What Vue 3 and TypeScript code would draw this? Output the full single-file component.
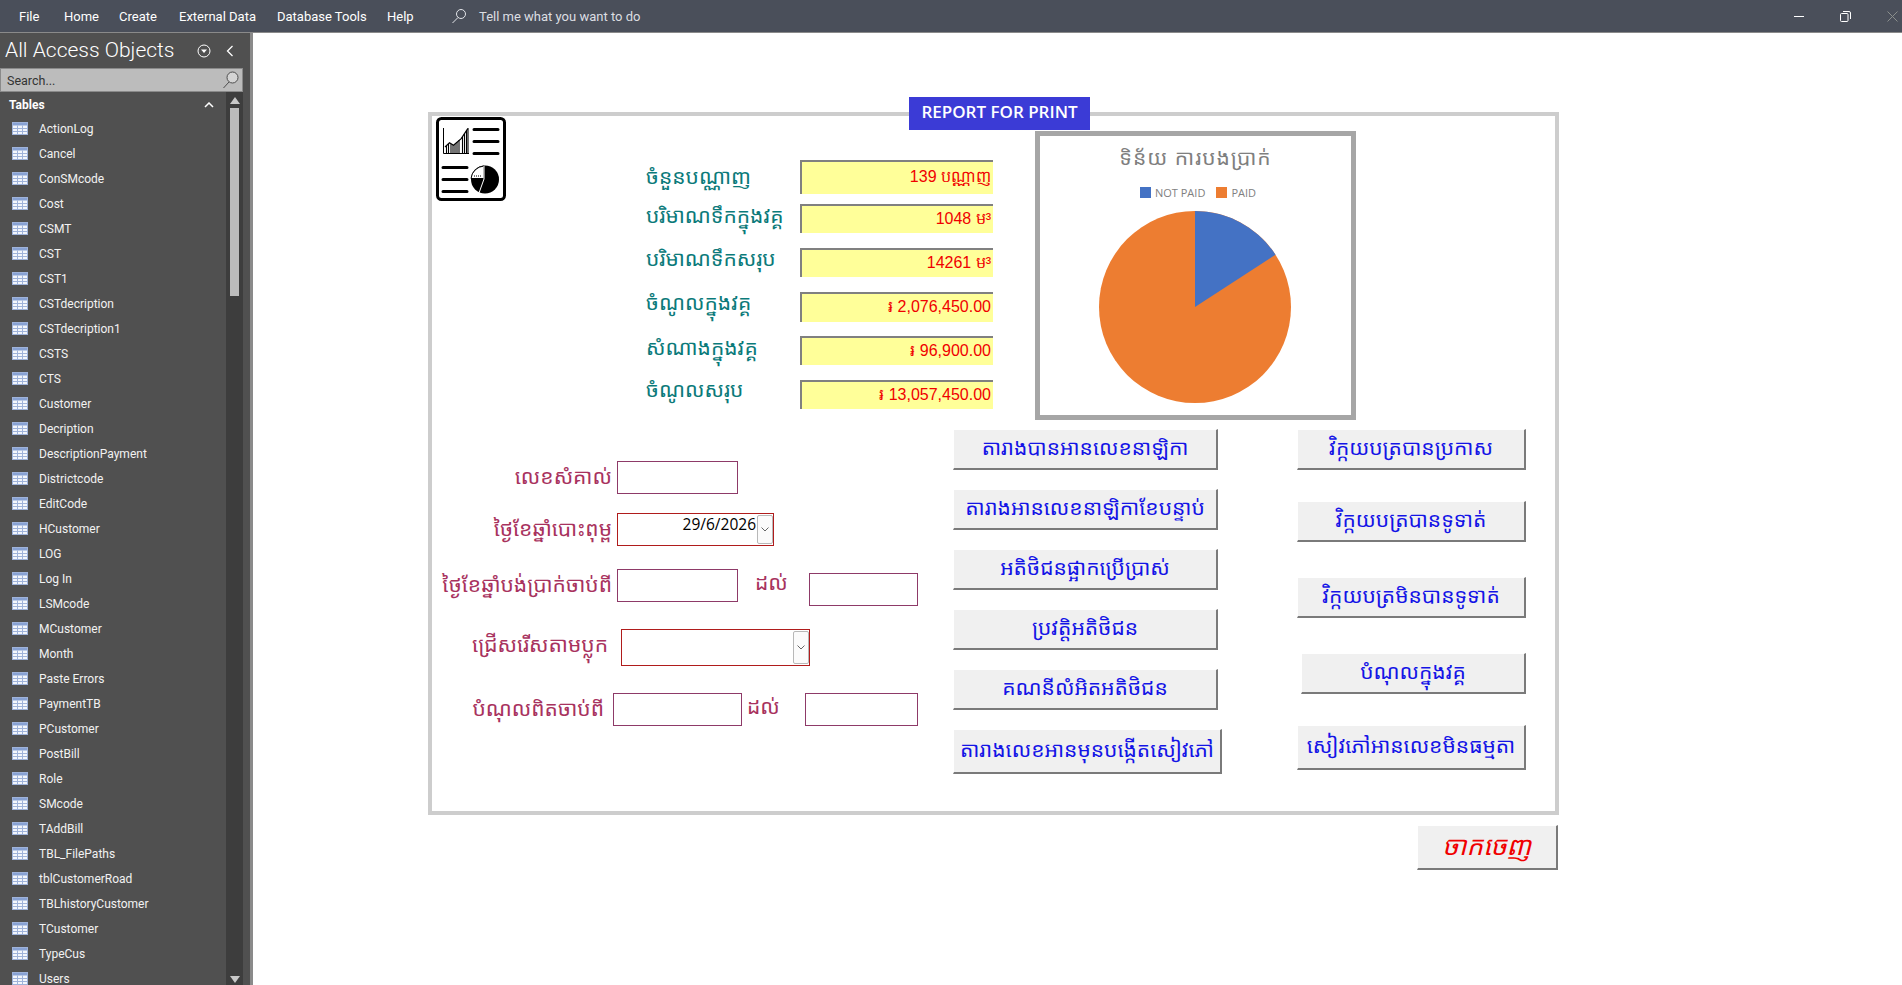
<template>
  <div class="app">
    <header class="topbar">
      <nav class="menu">
        <span v-for="m in menu" :key="m.name" :style="{ width: `${m.width}px` }">{{ m.name }}</span>
      </nav>
      <svg class="tell-icon" width="16" height="16" viewBox="0 0 16 16" fill="none" stroke="#e4e6ea" stroke-width="1">
        <circle cx="10" cy="6" r="4.5" />
        <path d="M7 9.5 1.5 15" />
      </svg>
      <span class="tell">Tell me what you want to do</span>
      <div class="win">
        <svg width="10" height="10" viewBox="0 0 10 10" stroke="#fff" fill="none"><path d="M0 5.5h10" /></svg>
        <svg width="11" height="11" viewBox="0 0 11 11" stroke="#fff" fill="none">
          <rect x="0.5" y="2.5" width="7.5" height="8" rx="1" />
          <path d="M3 .5h6a1.500 1.500 0 0 1 1.500 1.500v6" />
        </svg>
        <svg width="11" height="11" viewBox="0 0 11 11" stroke="#8b8f8c" fill="none"><path d="m.5.5 10 10M10.500.5l-10 10" /></svg>
      </div>
    </header>

    <div class="main">
      <aside class="nav">
        <div class="nav-head">
          <span class="nav-title">All Access Objects</span>
          <svg class="nav-drop" width="14" height="14" viewBox="0 0 14 14" fill="none" stroke="#fff">
            <circle cx="7" cy="7" r="6" />
            <path d="M4 5.500h6L7 9z" fill="#fff" stroke="none" />
          </svg>
          <svg class="nav-back" width="8" height="12" viewBox="0 0 8 12" fill="none" stroke="#fff" stroke-width="1.300">
            <path d="M6.500 1 1.500 6l5 5" />
          </svg>
        </div>
        <div class="nav-search">
          <span>Search...</span>
          <svg width="17" height="18" viewBox="0 0 17 18" fill="none" stroke="#4d4d4d">
            <circle cx="10.500" cy="6.500" r="5.500" fill="#d4d4d4" />
            <path d="M7 11 1.500 17" />
          </svg>
        </div>
        <div class="nav-body">
          <div class="nav-list">
            <div class="nav-group">
              <span>Tables</span>
              <svg width="10" height="6" viewBox="0 0 10 6" fill="none" stroke="#fff" stroke-width="1.500"><path d="m1 5 4-4 4 4" /></svg>
            </div>
            <div v-for="name in tables" :key="name" class="nav-item">
              <svg width="16" height="13" viewBox="0 0 16 13">
                <rect x="0.500" y="0.500" width="15" height="12" fill="#f3f6fc" stroke="#9fb3da" />
                <rect x="1" y="1" width="14" height="2.500" fill="#88a2d4" />
                <path d="M1 6.500h14M1 9.500h14M5.500 3.500v9M10.500 3.500v9" stroke="#9fb3da" />
              </svg>
              <span>{{ name }}</span>
            </div>
          </div>
          <div class="scroll">
            <i class="arrow up"></i>
            <i class="thumb"></i>
            <i class="arrow down"></i>
          </div>
        </div>
      </aside>
      <div class="splitter"></div>

      <section class="canvas">
        <div class="frame">
          <div class="badge">REPORT FOR PRINT</div>

          <div class="top">
            <svg class="report-icon" width="70" height="84" viewBox="0 0 70 84">
              <rect x="1.500" y="1.500" width="67" height="81" rx="4" fill="#fff" stroke="#000" stroke-width="3" />
              <path d="M7.500 11v25.500H33" fill="none" stroke="#000" />
              <path d="M9 30 13.500 25.700l4 2.600 7.700-6.600L31.800 11.700" fill="none" stroke="#000" stroke-width="1.200" />
              <path d="M10.500 36v-7M12.500 36V27M15 36V27M17 36V28M19 36v-9M21 36V25M23 36V23M26.500 36V20M28.500 36V17M30.500 36V14M32 36V11" stroke="#000" stroke-width="1.100" />
              <path d="M38 12.500h24M38 24.500h24M38 36.500h24M7 50.500h24M7 62.500h24M7 74.500h24" stroke="#000" stroke-width="3" stroke-linecap="round" />
              <circle cx="49" cy="62.500" r="14" fill="#000" />
              <path d="M48 49a14 14 0 0 0-13 12.500h13z" fill="#fff" stroke="#000" />
              <path d="M38 59h8" stroke="#000" stroke-dasharray="1 1" />
              <path d="m48 62-5 14" stroke="#fff" />
              <path d="M48 49v13" stroke="#fff" />
            </svg>

            <div class="summary">
              <div v-for="row in summary" :key="row.label" class="sum-row">
                <span class="sum-label" :style="{ marginTop: `${row.labelTop}px` }">{{ row.label }}</span>
                <span class="sum-field" :style="{ height: `${row.height}px` }">{{ row.value }}</span>
              </div>
            </div>

            <div class="chart">
              <div class="chart-title">ទិន័យ ការបងប្រាក់</div>
              <div class="legend">
                <i class="blue"></i><span>NOT PAID</span>
                <i class="orange"></i><span>PAID</span>
              </div>
              <svg class="pie" width="194" height="194" viewBox="-97 -97 194 194">
                <circle r="96" fill="#ed7d31" />
                <path d="M0 0V-96A96 96 0 0 1 80.500-52.300Z" fill="#4472c4" />
              </svg>
            </div>
          </div>

          <div class="bottom">
            <div class="form">
              <div class="f-row r1">
                <label class="f-label">លេខសំគាល់</label>
                <input class="box" type="text" />
              </div>
              <div class="f-row r2">
                <label class="f-label">ថ្ងៃខែឆ្នាំបោះពុម្ព</label>
                <div class="combo date">
                  <span>29/6/2026</span>
                  <i class="drop"><svg width="8" height="5" viewBox="0 0 8 5" fill="none" stroke="#666"><path d="m.5.500 3.500 3.500L7.500.500" /></svg></i>
                </div>
              </div>
              <div class="f-row r3">
                <label class="f-label">ថ្ងៃខែឆ្នាំបង់ប្រាក់ចាប់ពី</label>
                <input class="box" type="text" />
                <span class="to">ដល់</span>
                <input class="box narrow" type="text" />
              </div>
              <div class="f-row r4">
                <label class="f-label">ជ្រើសរើសតាមប្លុក</label>
                <div class="combo block">
                  <i class="drop"><svg width="8" height="5" viewBox="0 0 8 5" fill="none" stroke="#666"><path d="m.5.500 3.500 3.500L7.500.500" /></svg></i>
                </div>
              </div>
              <div class="f-row r5">
                <label class="f-label">បំណុលពិតចាប់ពី</label>
                <input class="box" type="text" />
                <span class="to">ដល់</span>
                <input class="box narrow" type="text" />
              </div>
            </div>

            <div class="col-left">
              <button v-for="b in leftButtons" :key="b" class="btn">{{ b }}</button>
              <button class="btn tall wide">តារាងលេខអានមុនបង្កើតសៀវភៅ</button>
            </div>

            <div class="col-right">
              <button class="btn">វិក្កយបត្របានប្រកាស</button>
              <button class="btn">វិក្កយបត្របានទូទាត់</button>
              <button class="btn">វិក្កយបត្រមិនបានទូទាត់</button>
              <button class="btn short">បំណុលក្នុងវគ្គ</button>
              <button class="btn tall">សៀវភៅអានលេខមិនធម្មតា</button>
            </div>
          </div>
        </div>
        <button class="btn exit">ចាកចេញ</button>
      </section>
    </div>
  </div>
</template>

<script setup lang="ts">
const menu = [
  { name: 'File', width: 45 },
  { name: 'Home', width: 55 },
  { name: 'Create', width: 60 },
  { name: 'External Data', width: 98 },
  { name: 'Database Tools', width: 110 },
  { name: 'Help', width: 64 }
]

const tables = [
  'ActionLog', 'Cancel', 'ConSMcode', 'Cost', 'CSMT', 'CST', 'CST1', 'CSTdecription',
  'CSTdecription1', 'CSTS', 'CTS', 'Customer', 'Decription', 'DescriptionPayment',
  'Districtcode', 'EditCode', 'HCustomer', 'LOG', 'Log In', 'LSMcode', 'MCustomer', 'Month',
  'Paste Errors', 'PaymentTB', 'PCustomer', 'PostBill', 'Role', 'SMcode', 'TAddBill',
  'TBL_FilePaths', 'tblCustomerRoad', 'TBLhistoryCustomer', 'TCustomer', 'TypeCus', 'Users'
]

const summary = [
  { label: 'ចំនួនបណ្ណាញ', value: '139 បណ្ណាញ', height: 34, labelTop: -1 },
  { label: 'បរិមាណទឹកក្នុងវគ្គ', value: '1048 ម³', height: 29, labelTop: -6 },
  { label: 'បរិមាណទឹកសរុប', value: '14261 ម³', height: 29, labelTop: -7 },
  { label: 'ចំណូលក្នុងវគ្គ', value: '៛ 2,076,450.00', height: 30, labelTop: -7 },
  { label: 'សំណាងក្នុងវគ្គ', value: '៛ 96,900.00', height: 29, labelTop: -6 },
  { label: 'ចំណូលសរុប', value: '៛ 13,057,450.00', height: 29, labelTop: -8 }
]

const leftButtons = [
  'តារាងបានអានលេខនាឡិកា',
  'តារាងអានលេខនាឡិកាខែបន្ទាប់',
  'អតិថិជនផ្អាកប្រើប្រាស់',
  'ប្រវត្តិអតិថិជន',
  'គណនីលំអិតអតិថិជន'
]
</script>

<style>
html,
body {
  margin: 0;
  overflow: hidden;
}
</style>

<style scoped>
.app {
  width: 1902px;
  height: 985px;
  display: flex;
  flex-direction: column;
  overflow: hidden;
  font-family: "Open Sans", "Noto Sans", "Noto Sans Khmer", "Khmer OS", "DejaVu Sans", sans-serif;
}

.topbar {
  height: 32px;
  flex: none;
  display: flex;
  align-items: center;
  background: #4a4f5a;
  color: #fff;
  font-family: Roboto, "Open Sans", sans-serif;
  font-size: 13px;
  border-bottom: 1px solid #8a8a8a;
}

.menu {
  display: flex;
  width: 451px;
  flex: none;
  padding-left: 19px;
  box-sizing: border-box;
}

.tell {
  margin-left: 12px;
  color: #dcdee2;
}

.win {
  margin-left: auto;
  margin-right: 4px;
  display: flex;
  align-items: center;
  gap: 36px;
}

.main {
  flex: 1;
  display: flex;
  min-height: 0;
}

.nav {
  width: 248px;
  flex: none;
  display: flex;
  flex-direction: column;
  background: #505050;
  color: #fff;
  overflow: hidden;
  font-family: Roboto, "Open Sans", sans-serif;
}

.nav-head {
  height: 35px;
  flex: none;
  display: flex;
  align-items: center;
  padding-left: 5px;
  font-size: 21px;
  font-weight: 300;
}

.nav-title {
  width: 192px;
  margin-top: -2px;
  white-space: nowrap;
}

.nav-back {
  margin-left: 15px;
}

.nav-search {
  width: 243px;
  height: 24px;
  flex: none;
  box-sizing: border-box;
  display: flex;
  align-items: center;
  justify-content: space-between;
  padding: 0 3px 0 6px;
  background: #bcbcbc;
  border: 1px solid #8a8a8a;
  color: #333;
  font-size: 12.5px;
}

.nav-body {
  flex: 1;
  min-height: 0;
  display: flex;
}

.nav-list {
  width: 226px;
  flex: none;
  overflow: hidden;
}

.nav-group {
  height: 22px;
  margin-top: 2px;
  display: flex;
  align-items: center;
  justify-content: space-between;
  padding: 0 12px 0 9px;
  font-size: 12px;
  font-weight: 700;
}

.nav-item {
  height: 25px;
  display: flex;
  align-items: center;
  gap: 11px;
  padding-left: 12px;
  font-size: 12px;
  white-space: nowrap;
  color: #f2f2f2;
}

.scroll {
  width: 17px;
  flex: none;
  background: #3d3d3d;
  display: flex;
  flex-direction: column;
  align-items: center;
  padding-top: 5px;
}

.arrow {
  width: 0;
  height: 0;
  border-left: 5px solid transparent;
  border-right: 5px solid transparent;
}

.arrow.up {
  border-bottom: 7px solid #c8c8c8;
}

.arrow.down {
  margin-top: auto;
  margin-bottom: 2px;
  border-top: 7px solid #c8c8c8;
}

.thumb {
  width: 9px;
  height: 188px;
  margin-top: 4px;
  background: #bcbcbc;
}

.splitter {
  flex: none;
  background: #8a8a8a;
  border-left: 2px solid #505050;
  width: 3px;
}

.canvas {
  flex: 1;
  background: #fff;
  padding: 79px 0 0 175px;
}

.frame {
  position: relative;
  width: 1131px;
  height: 703px;
  box-sizing: border-box;
  border: 4px solid #cdcdcd;
}

.badge {
  position: absolute;
  left: 477px;
  top: -19px;
  width: 181px;
  height: 33px;
  box-sizing: border-box;
  padding-bottom: 4px;
  display: flex;
  align-items: center;
  justify-content: center;
  background: #3b3bd6;
  color: #fff;
  font-size: 17px;
  font-weight: 600;
}

.top {
  display: flex;
  align-items: flex-start;
  height: 313px;
}

.report-icon {
  margin: 1px 0 0 4px;
  flex: none;
}

.summary {
  margin: 44px 0 0 140px;
  width: 347px;
  flex: none;
}

.sum-row {
  height: 44px;
  display: flex;
  align-items: flex-start;
  justify-content: space-between;
}

.sum-label {
  color: #0b7a7a;
  font-size: 21px;
  line-height: 34px;
  white-space: nowrap;
}

.sum-field {
  width: 193px;
  box-sizing: border-box;
  display: flex;
  align-items: center;
  justify-content: flex-end;
  padding-right: 2px;
  background: #ffff99;
  border-top: 2px solid #808080;
  border-left: 2px solid #808080;
  color: #f00000;
  font: 16px "Liberation Sans", "Noto Sans", sans-serif;
  white-space: nowrap;
}

.chart {
  width: 321px;
  height: 289px;
  margin: 15px 0 0 42px;
  flex: none;
  box-sizing: border-box;
  border: 5px solid #a6a6a6;
  display: flex;
  flex-direction: column;
  align-items: center;
}

.chart-title {
  margin-top: 8px;
  height: 26px;
  line-height: 26px;
  color: #7f7f7f;
  font-size: 21px;
  letter-spacing: 1px;
  white-space: nowrap;
}

.legend {
  margin: 14px 0 0 16px;
  height: 16px;
  display: flex;
  align-items: center;
  color: #7f7f7f;
  font-size: 11px;
}

.legend i {
  width: 11px;
  height: 11px;
  margin-right: 4px;
}

.legend span {
  margin-right: 11px;
}

.legend .blue { background: #4472c4; }
.legend .orange { background: #ed7d31; }

.pie {
  margin: 10px 2px 0 0;
}

.bottom {
  display: flex;
  align-items: flex-start;
}

.form {
  width: 521px;
  flex: none;
  padding-top: 32px;
}

.f-row {
  display: flex;
  align-items: flex-start;
}

.r2 { margin-top: 19px; }
.r3 { margin-top: 23px; }
.r4 { margin-top: 23px; }
.r5 { margin-top: 27px; }

.f-label {
  width: 180px;
  margin-right: 5px;
  flex: none;
  text-align: right;
  color: #a8325e;
  font-size: 21px;
  line-height: 30px;
  white-space: nowrap;
}

.r4 .f-label {
  width: 176px;
  margin-right: 13px;
}

.r5 .f-label {
  width: 172px;
  margin-right: 9px;
}

.box {
  width: 121px;
  height: 33px;
  box-sizing: border-box;
  padding: 0;
  border: 1px solid #8e3a68;
  border-radius: 0;
  background: #fff;
  outline: none;
}

.r5 .box {
  width: 129px;
}

.box.narrow {
  width: 109px;
}

.r5 .box.narrow {
  width: 113px;
}

.r3 .box.narrow {
  margin-top: 4px;
}

.to {
  width: 71px;
  padding-left: 17px;
  box-sizing: border-box;
  color: #a8325e;
  font-size: 21px;
  line-height: 26px;
}

.r5 .to {
  width: 63px;
  padding-left: 5px;
}

.combo {
  box-sizing: border-box;
  border: 1px solid #b01c1c;
  display: flex;
  justify-content: flex-end;
  background: #fff;
}

.date {
  width: 157px;
  height: 33px;
  font-size: 15.500px;
  line-height: 20px;
  color: #000;
}

.block {
  width: 189px;
  height: 37px;
}

.drop {
  width: 16px;
  margin: 1px 0 1px 1px;
  display: flex;
  align-items: center;
  justify-content: center;
  box-sizing: border-box;
  background: #fbfbfb;
  border: 1px solid #b8b8b8;
  border-radius: 2px;
}

.col-left {
  width: 344px;
  flex: none;
  display: flex;
  flex-direction: column;
  gap: 19px;
}

.btn {
  width: 100%;
  height: 41px;
  box-sizing: border-box;
  padding: 0 0 4px;
  background: #f0f0f0;
  border: 0;
  border-top: 1px solid #fff;
  border-left: 1px solid #fff;
  border-right: 2px solid #7a7a7a;
  border-bottom: 2px solid #7a7a7a;
  color: #1414e6;
  font-family: inherit;
  font-size: 21px;
  line-height: 34px;
  white-space: nowrap;
  overflow: hidden;
}

.col-left .btn {
  width: 265px;
}

.col-left .btn.wide {
  width: 269px;
}

.col-right {
  width: 229px;
  flex: none;
  display: flex;
  flex-direction: column;
  align-items: flex-end;
}

.col-right .btn:nth-child(2) { margin-top: 31px; }
.col-right .btn:nth-child(3) { margin-top: 35px; }
.col-right .btn:nth-child(4) { margin-top: 35px; }
.col-right .btn:nth-child(5) { margin-top: 31px; }

.btn.short {
  width: 225px;
}

.btn.tall {
  height: 45px;
}

.btn.exit {
  display: block;
  width: 141px;
  height: 45px;
  margin: 10px 0 0 989px;
  color: #f00000;
  font-size: 26px;
  font-style: italic;
}
</style>
